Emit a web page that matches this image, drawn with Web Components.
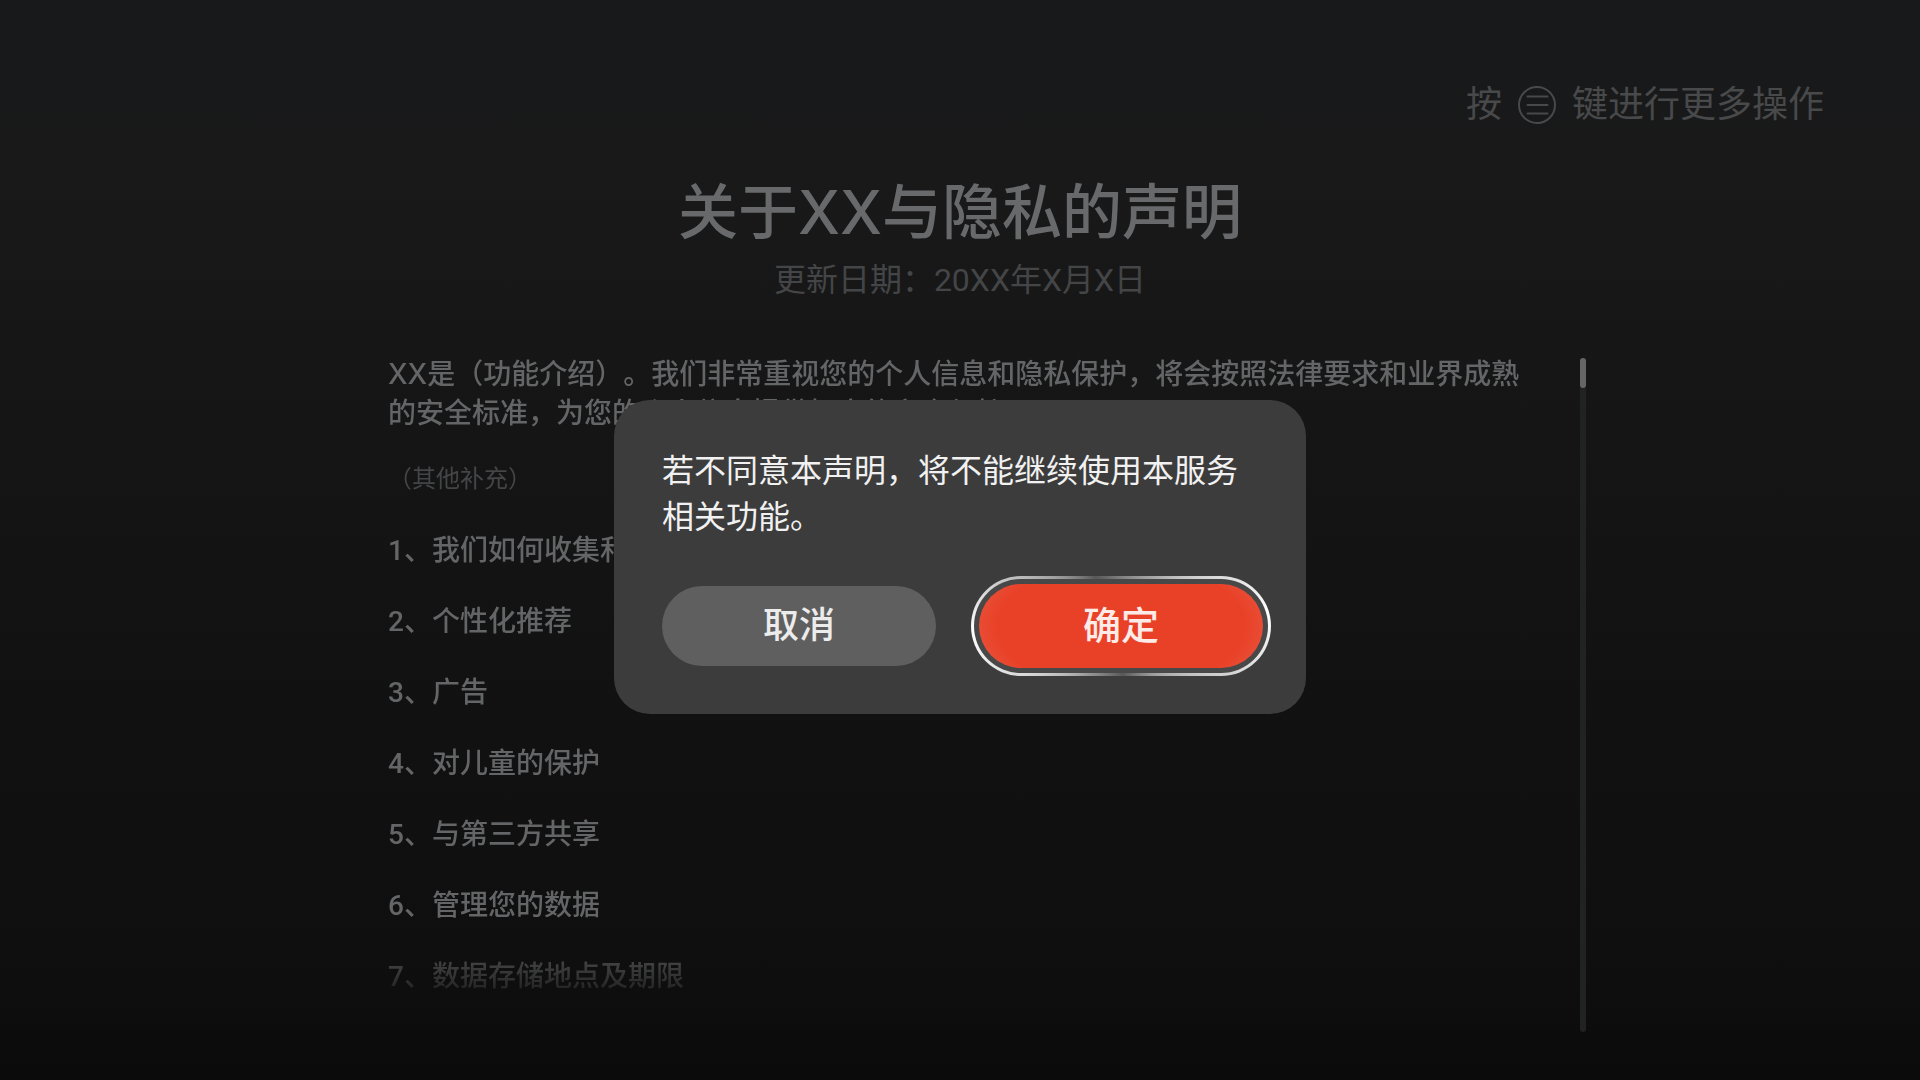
<!DOCTYPE html>
<html lang="zh-CN">
<head>
<meta charset="utf-8">
<title>关于XX与隐私的声明</title>
<style>
  html { height: 100%; }
  body {
    margin: 0;
    min-height: 100%;
    background: linear-gradient(#18191a 0%, #19191a 16%, #151516 40%, #111112 68%, #0f0f0f 88%, #0b0b0b 100%) #0b0b0b;
    color: #666768;
    font-family: Roboto, "Noto Sans CJK SC", sans-serif;
    text-spacing-trim: space-all;
  }
</style>
</head>
<body>
<privacy-page>
  <menu-hint slot="hint"></menu-hint>
  <statement-heading slot="heading">关于XX与隐私的声明<span slot="date">更新日期：20XX年X月X日</span></statement-heading>
  <scroll-panel>
    <statement-body>
      <p>XX是（功能介绍）。我们非常重视您的个人信息和隐私保护，将会按照法律要求和业界成熟的安全标准，为您的个人信息提供相应的安全保护。</p>
      <span slot="note">（其他补充）</span>
      <statement-item slot="items">1、我们如何收集和使用您的个人信息</statement-item>
      <statement-item slot="items">2、个性化推荐</statement-item>
      <statement-item slot="items">3、广告</statement-item>
      <statement-item slot="items">4、对儿童的保护</statement-item>
      <statement-item slot="items">5、与第三方共享</statement-item>
      <statement-item slot="items">6、管理您的数据</statement-item>
      <statement-item slot="items">7、数据存储地点及期限</statement-item>
    </statement-body>
  </scroll-panel>
  <confirm-dialog slot="dialog">
    若不同意本声明，将不能继续使用本服务相关功能。
    <pill-button slot="actions">取消</pill-button>
    <pill-button slot="actions" focused>确定</pill-button>
  </confirm-dialog>
</privacy-page>

<script>
  const define = (name, html) => {
    const template = document.createElement('template');
    template.innerHTML = html;
    customElements.define(name, class extends HTMLElement {
      constructor() {
        super();
        this.attachShadow({ mode: 'open' }).append(template.content.cloneNode(true));
      }
    });
  };

  define('privacy-page', `
    <style>
      :host { display: flex; flex-direction: column; position: relative; height: 100vh; box-sizing: border-box; padding: 81px 96px 48px; }
      header { display: flex; justify-content: flex-end; margin-bottom: 48px; }
      main { display: flex; flex-direction: column; gap: 54px; flex: 1; min-height: 0; }
    </style>
    <header><slot name="hint"></slot></header>
    <main><slot name="heading"></slot><slot></slot></main>
    <slot name="dialog"></slot>
  `);

  define('menu-hint', `
    <style>
      :host { display: flex; align-items: center; gap: 16px; font-size: 36px; line-height: 48px; color: #48494a; font-weight: 400; }
      svg { display: block; width: 38px; height: 38px; fill: none; stroke: currentColor; stroke-width: 2; stroke-linecap: round; }
    </style>
    <span>按</span>
    <svg viewBox="0 0 38 38" role="img" aria-label="菜单"><circle cx="19" cy="19" r="18"/><path d="M9.500 10.500h20M9.500 19h20M9.500 27.500h20"/></svg>
    <span>键进行更多操作</span>
  `);

  define('statement-heading', `
    <style>
      :host { display: flex; flex-direction: column; align-items: center; gap: 12px; text-align: center; }
      h1 { margin: 0; font-family: Inter, "Noto Sans CJK SC", sans-serif; font-size: 60px; line-height: 70px; font-weight: 500; color: #68696b; }
      p { margin: 0; font-size: 32px; line-height: 42px; color: #444546; }
    </style>
    <h1><slot></slot></h1>
    <p><slot name="date"></slot></p>
  `);

  define('scroll-panel', `
    <style>
      :host { display: grid; grid-template-columns: 1fr minmax(0, 1144px) 1fr; flex: 1; min-height: 0; }
      .view {
        grid-column: 2; overflow: hidden; min-height: 0;
        -webkit-mask-image: linear-gradient(#000 calc(100% - 104px), transparent calc(100% - 20px));
        mask-image: linear-gradient(#000 calc(100% - 104px), transparent calc(100% - 20px));
      }
      .track { width: 6px; margin: 3px 0 0 48px; border-radius: 3px; background: #212222; }
      .thumb { height: 30px; border-radius: 3px; background: #666; }
    </style>
    <div class="view"><slot></slot></div>
    <div class="track"><div class="thumb"></div></div>
  `);

  define('statement-body', `
    <style>
      :host { display: flex; flex-direction: column; gap: 32px; font-size: 28px; line-height: 39px; font-weight: 500; color: #646566; }
      ::slotted(p) { margin: 0; font-family: Inter, "Noto Sans CJK SC", sans-serif; }
      .note { font-size: 24px; line-height: 28px; font-weight: 400; color: #444546; }
      section { display: flex; flex-direction: column; gap: 32px; padding-top: 6px; }
    </style>
    <slot></slot>
    <div class="note"><slot name="note"></slot></div>
    <section><slot name="items"></slot></section>
  `);

  define('statement-item', `
    <style>:host { display: block; }</style>
    <slot></slot>
  `);

  define('confirm-dialog', `
    <style>
      :host { position: absolute; inset: 0; display: grid; place-items: center; padding-top: 34px; }
      .card { display: flex; flex-direction: column; gap: 46px; width: 692px; max-width: 90%; box-sizing: border-box; padding: 48px; border-radius: 36px; background: #3c3c3c; }
      .message { margin: 0; font-size: 32px; line-height: 46px; color: #f1f1f1; }
      .actions { display: flex; align-items: center; gap: 48px; height: 80px; }
    </style>
    <div class="card" role="dialog" aria-modal="true" aria-labelledby="message">
      <p class="message" id="message"><slot></slot></p>
      <div class="actions"><slot name="actions"></slot></div>
    </div>
  `);

  define('pill-button', `
    <style>
      :host { display: flex; flex: 1; }
      button {
        flex: 1; height: 80px; box-sizing: border-box; margin: 0; padding: 0; border: 0; border-radius: 50px;
        background: #5f5f5f; color: #ececec; font: 500 36px/50px Roboto, "Noto Sans CJK SC", sans-serif;
      }
      :host([focused]) button {
        height: 100px; margin: 0 -13px; padding: 5px; border: 3px solid transparent; font-size: 38px; color: #fdebe8; outline: none;
        background:
          radial-gradient(ellipse 53% 95% at center, #e94128 82%, #e95039 100%) content-box,
          linear-gradient(#484848, #484848) padding-box,
          conic-gradient(#808080 0deg, #a8a8a8 35deg, #d8d8d8 62deg, #fff 85deg, #d0d0d0 116deg, #a0a0a0 145deg,
            #585858 178deg, #989898 215deg, #d8d8d8 243deg, #fff 268deg, #b8b8b8 297deg, #909090 312deg, #585858 332deg, #808080 360deg) border-box;
      }
    </style>
    <button type="button"><slot></slot></button>
  `);
</script>
</body>
</html>
